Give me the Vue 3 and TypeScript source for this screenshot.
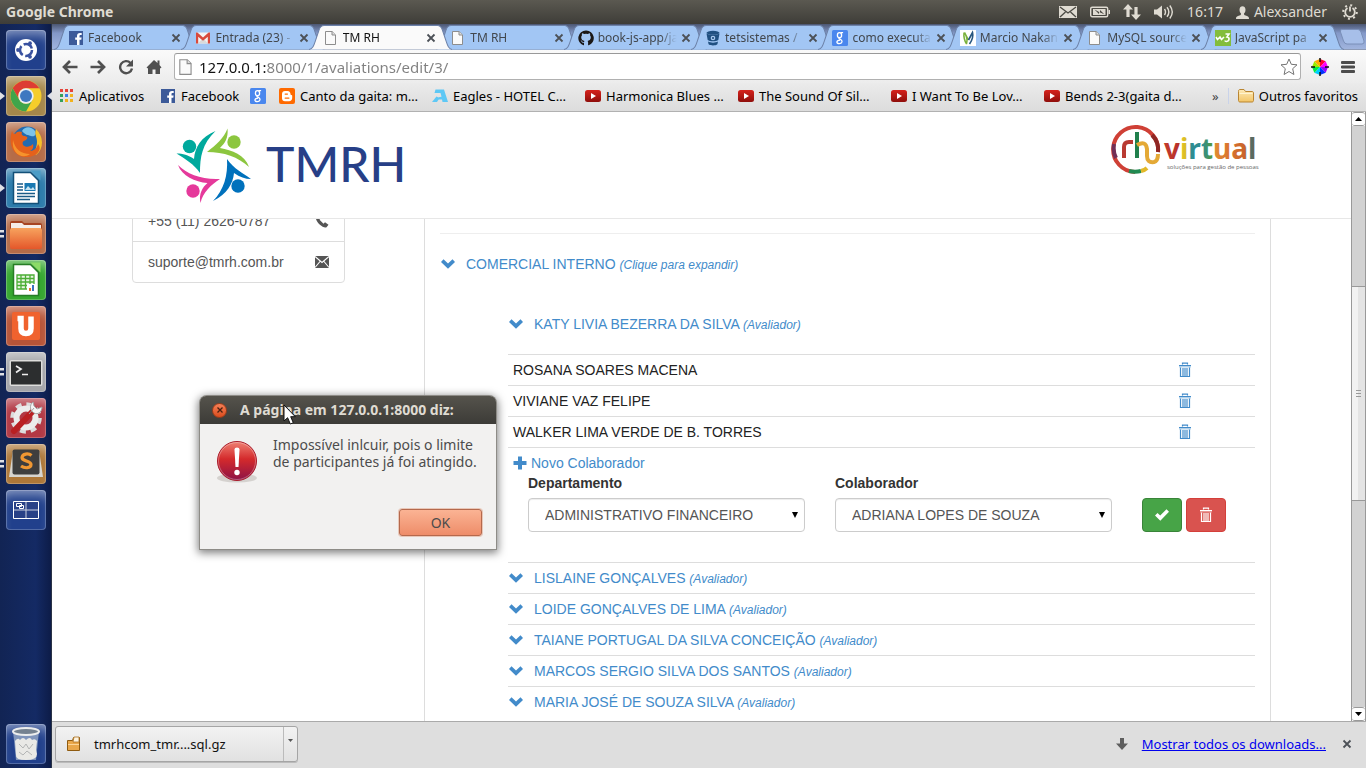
<script setup lang="ts">
import { ref } from 'vue'

interface Tab { title: string; icon: string; active?: boolean }
interface Bookmark { title: string; icon: string }
interface LauncherItem { name: string; icon: string; left?: 'arrow' | 'pips'; right?: boolean }

const tabs: Tab[] = [
  { title: 'Facebook', icon: 'facebook' },
  { title: 'Entrada (23) -', icon: 'gmail' },
  { title: 'TM RH', icon: 'page', active: true },
  { title: 'TM RH', icon: 'page' },
  { title: 'book-js-app/ja', icon: 'github' },
  { title: 'tetsistemas /', icon: 'bitbucket' },
  { title: 'como executa', icon: 'google' },
  { title: 'Marcio Nakan', icon: 'marcio' },
  { title: 'MySQL source', icon: 'page' },
  { title: 'JavaScript pa', icon: 'w3' },
]

const bookmarks: Bookmark[] = [
  { title: 'Aplicativos', icon: 'apps' },
  { title: 'Facebook', icon: 'facebook' },
  { title: '', icon: 'google' },
  { title: 'Canto da gaita: m…', icon: 'blogger' },
  { title: 'Eagles - HOTEL C…', icon: 'eagles' },
  { title: 'Harmonica Blues …', icon: 'youtube' },
  { title: 'The Sound Of Sil…', icon: 'youtube' },
  { title: 'I Want To Be Lov…', icon: 'youtube' },
  { title: 'Bends 2-3(gaita d…', icon: 'youtube' },
]

const launcher: LauncherItem[] = [
  { name: 'Dash', icon: 'dash' },
  { name: 'Chrome', icon: 'chrome', left: 'arrow', right: true },
  { name: 'Firefox', icon: 'firefox' },
  { name: 'Writer', icon: 'writer', left: 'arrow' },
  { name: 'Arquivos', icon: 'files', left: 'pips' },
  { name: 'Calc', icon: 'calc' },
  { name: 'Ubuntu One', icon: 'one' },
  { name: 'Terminal', icon: 'terminal', left: 'pips' },
  { name: 'Configurações', icon: 'settings' },
  { name: 'Sublime Text', icon: 'sublime', left: 'pips' },
  { name: 'Espaços de trabalho', icon: 'workspaces' },
]

const members = ['ROSANA SOARES MACENA', 'VIVIANE VAZ FELIPE', 'WALKER LIMA VERDE DE B. TORRES']
const evaluators = [
  'LISLAINE GONÇALVES',
  'LOIDE GONÇALVES DE LIMA',
  'TAIANE PORTUGAL DA SILVA CONCEIÇÃO',
  'MARCOS SERGIO SILVA DOS SANTOS',
  'MARIA JOSÉ DE SOUZA SILVA',
]

const url = ref('127.0.0.1:8000/1/avaliations/edit/3/')
const department = ref('ADMINISTRATIVO FINANCEIRO')
const collaborator = ref('ADRIANA LOPES DE SOUZA')
const alertOpen = ref(true)
</script>

<template>
  <div class="desktop">
    <svg class="sprite" aria-hidden="true">
      <defs>
        <linearGradient id="g-red" x1="0" y1="0" x2="0" y2="1">
          <stop offset="0" stop-color="#ef8173" /><stop offset=".45" stop-color="#d42a2c" /><stop offset="1" stop-color="#8c1246" />
        </linearGradient>
        <linearGradient id="g-yt" x1="0" y1="0" x2="0" y2="1">
          <stop offset="0" stop-color="#d6221c" /><stop offset="1" stop-color="#8f0e0b" />
        </linearGradient>
        <linearGradient id="g-orange" x1="0" y1="0" x2="0" y2="1">
          <stop offset="0" stop-color="#f7a35e" /><stop offset="1" stop-color="#e4572a" />
        </linearGradient>
        <linearGradient id="g-folder" x1="0" y1="0" x2="0" y2="1">
          <stop offset="0" stop-color="#fdeab8" /><stop offset="1" stop-color="#f3c566" />
        </linearGradient>
        <linearGradient id="g-word" x1="0" y1="0" x2="1" y2="0">
          <stop offset="0" stop-color="#c23a2c" /><stop offset=".16" stop-color="#b8322c" /><stop offset=".18" stop-color="#e0c426" /><stop offset=".27" stop-color="#d8b729" />
          <stop offset=".28" stop-color="#2f8c91" /><stop offset=".42" stop-color="#2f8c91" /><stop offset=".52" stop-color="#53993c" /><stop offset=".56" stop-color="#e08a32" />
          <stop offset=".7" stop-color="#d9742f" /><stop offset=".88" stop-color="#c9642c" /><stop offset=".9" stop-color="#2c7f91" /><stop offset="1" stop-color="#7f5a34" />
        </linearGradient>
      </defs>
      <symbol id="i-page" viewBox="0 0 16 16"><path d="M2.500 1.500h6.600l3.400 3.400v9.600h-10z" fill="#fafafa" stroke="#8d8d8d" /><path d="M9 1.500V5h3.500" fill="#ddd" stroke="#8d8d8d" /></symbol>
      <symbol id="i-facebook" viewBox="0 0 16 16"><path fill="#3c5a99" d="M1 1h14v14H1z" /><path fill="#fff" d="M9 15V9.700H7.200V7.500H9V6c0-2 1.100-3 3-3h1.700v2.100h-1.100c-.9 0-1.100.4-1.100 1.100v1.300h2.100l-.3 2.200h-1.800V15z" /></symbol>
      <symbol id="i-gmail" viewBox="0 0 16 16"><path fill="#f4f4f4" d="M1 2.500h14v11H1z" /><path fill="#dadada" d="M3 13.500 8 8l5 5.500z" /><path fill="#d84a3d" d="M1 13.500v-11h1.400L8 7.400l5.600-4.900H15v11h-2.200V6.700L8 10.800 3.200 6.700v6.800z" /></symbol>
      <symbol id="i-github" viewBox="0 0 16 16"><path fill="#1b1817" fill-rule="evenodd" d="M8 .5a7.600 7.600 0 0 0-2.500 14.800c.4.100.5-.2.500-.4v-2.100c-1.700.3-2.300-.6-2.500-1.200C3.200 11 3 10.600 2.500 10.300c1-.2 1.500.8 1.800 1.200.5.7 1.200.6 1.700.4.100-.5.300-.8.500-1C4.700 10.600 3.200 9.800 3.200 7.300c0-.9.300-1.600.8-2.100-.2-.5-.2-1.300.1-2 .8 0 1.400.4 2 .8a7 7 0 0 1 3.800 0c.6-.4 1.200-.8 2-.8.3.7.3 1.500.1 2 .5.5.8 1.200.8 2.100 0 2.500-1.500 3.300-3.300 3.600.4.300.6.8.6 1.600v2.400c0 .2.100.5.500.4A7.600 7.600 0 0 0 8 .5z" /></symbol>
      <symbol id="i-bitbucket" viewBox="0 0 16 16"><ellipse cx="8" cy="2.800" rx="6.500" ry="2" fill="#205081" /><path fill="#205081" d="M1.500 3.500c2 1.700 11 1.700 13 0L13.300 10c-2 1.700-8.600 1.700-10.600 0zM3 11.500c2.500 1.500 7.500 1.500 10 0l-.6 2.700c-1.500 1.600-7.300 1.600-8.800 0z" /><circle cx="8" cy="8" r="2.300" fill="#a9c8ee" /><circle cx="8" cy="8" r="1.100" fill="#205081" /></symbol>
      <symbol id="i-google" viewBox="0 0 16 16"><rect width="16" height="16" rx="1.500" fill="#4a87ee" /><g fill="none" stroke="#fff" stroke-width="1.300"><ellipse cx="7.500" cy="5.200" rx="2.100" ry="2.500" /><path d="M8.500 2.700h2.600M7.200 7.800C6 9 9.600 9 10 11.200c.2 1.600-1.200 2.400-2.800 2.400-3 0-3.400-3 .8-3.500" /></g></symbol>
      <symbol id="i-marcio" viewBox="0 0 16 16"><path fill="#fff" d="M0 0h16v16H0z" /><path d="M4 2.500c-.5 4 .5 8 2.500 11.500M6.500 14C8 9 6 5 4.500 2.500L8.500 10" fill="none" stroke="#7ab13c" stroke-width="1.500" /><path d="m8.500 10 4-7.500c1 4-.5 8-3 11.500" fill="none" stroke="#27567f" stroke-width="1.600" /></symbol>
      <symbol id="i-w3" viewBox="0 0 16 16"><path fill="#83bd3c" d="M0 0h16v16H0z" /><path d="m1 7 1.500 2.500L5 7l1.500 2.500L9 7M10.500 4h3.500L12 7c2.800 0 2.800 4-.5 4.500-1 0-1.500-.5-1.500-1" fill="none" stroke="#fff" stroke-width="1.600" /></symbol>
      <symbol id="i-apps" viewBox="0 0 14 14"><path fill="#e5433a" d="M0 0h3v3H0zM5 0h3v3H5zM10 0h3v3h-3z" /><path fill="#34a05a" d="M0 5h3v3H0z" /><path fill="#3d7fe8" d="M5 5h3v3H5z" /><path fill="#f2b21b" d="M10 5h3v3h-3zM5 10h3v3H5zM10 10h3v3h-3z" /><path fill="#34a05a" d="M0 10h3v3H0z" /></symbol>
      <symbol id="i-blogger" viewBox="0 0 16 16"><rect width="16" height="16" rx="2" fill="#ff6a00" /><path fill="#fff" fill-rule="evenodd" d="M6 3h2.500C10.500 3 11.500 4.500 11.500 6c0 .8.300 1 1 1 .4 0 .7.300.7.800V10c0 2-1.300 3.200-3.200 3.200H6C4.200 13.200 3 12 3 10.200V6c0-1.800 1.200-3 3-3zm.2 2.500c-.9 0-.9 1.200 0 1.200h2.200c.9 0 .9-1.200 0-1.200zm0 4c-.9 0-.9 1.300 0 1.300h3.700c.9 0 .9-1.300 0-1.300z" /></symbol>
      <symbol id="i-eagles" viewBox="0 0 16 16"><path fill="#5ec8f5" d="M3.500 1.500h8.500L16 14h-5.500L10 11.500H5.500c.5-2 2-2.700 4-2.700L8.500 5H2.500z" /><path fill="#5ec8f5" d="M4.500 8.500 0 14h5l2.500-4z" /></symbol>
      <symbol id="i-youtube" viewBox="0 0 16 16"><rect y="2" width="16" height="12" rx="2.500" fill="url(#g-yt)" /><path fill="#fff" d="m6 5 5 3-5 3z" /></symbol>
      <symbol id="i-folder" viewBox="0 0 16 16"><path d="M.5 3.500C.5 2 1 1.500 2 1.500h4l1.500 2h6.500c1 0 1.500.5 1.500 1.500v7.500c0 .8-.5 1.500-1.500 1.500H2c-1 0-1.500-.7-1.500-1.500z" fill="url(#g-folder)" stroke="#b98531" /><path d="M1.500 5.500h13" stroke="#fff3cf" /></symbol>
      <symbol id="i-close" viewBox="0 0 10 10"><path d="m1.500 1.500 7 7m0-7-7 7" stroke="#4c5157" stroke-width="1.800" fill="none" /></symbol>
      <symbol id="i-chevron" viewBox="0 0 14 10"><path fill="currentColor" d="M2.500.3 7 4.500 11.500.3 14 2.900 7 9.800 0 2.900z" /></symbol>
      <symbol id="i-trash" viewBox="0 0 14 16"><path d="M4.500 2.500V1.200h5v1.300" fill="none" stroke="currentColor" stroke-width="1.200" /><path fill="currentColor" d="M1 3h12v2.500H1z" opacity=".4" /><path d="M1 3.500h12" stroke="currentColor" /><path d="M2.500 5.500v9h9v-9M5 6v8M7 6v8M9 6v8" fill="none" stroke="currentColor" stroke-width="1.200" /></symbol>
      <symbol id="i-check" viewBox="0 0 14 12"><path fill="currentColor" d="M0 6.600 2.500 4l2.700 2.600L11.500.3 14 2.800 5.300 11.800z" /></symbol>

      <symbol id="i-dash" viewBox="0 0 40 40"><circle cx="20" cy="20" r="11" fill="#fff" /><circle cx="20" cy="20" r="6" fill="none" stroke="#3a52a0" stroke-width="2.500" stroke-dasharray="10 2.560" /><circle cx="12" cy="20" r="1.900" fill="#3a52a0" /><circle cx="24" cy="13.200" r="1.900" fill="#3a52a0" /><circle cx="24" cy="26.800" r="1.900" fill="#3a52a0" /></symbol>
      <symbol id="i-chrome" viewBox="0 0 40 40"><circle cx="20" cy="20" r="15.500" fill="#f5cd2b" /><path fill="#dd3c33" d="M6.600 12.300a15.500 15.500 0 0 1 26.800 0H20a7.700 7.700 0 0 0-6.700 11.500z" /><path fill="#3fa54b" d="M6.600 12.300a15.500 15.500 0 0 0 13.400 23.200l6.700-11.700A7.700 7.700 0 0 1 13.300 23.800z" /><circle cx="20" cy="20" r="7.700" fill="#e8eef6" /><circle cx="20" cy="20" r="6" fill="#3f78c0" /></symbol>
      <symbol id="i-firefox" viewBox="0 0 40 40"><circle cx="21" cy="19" r="14.500" fill="#236bb0" /><path fill="#7cc3e8" d="M16 9c3-5 9-5 13 0 2 4-1 6-4 5s-6-1-9-5z" /><path fill="#f5bf2b" d="M30 7c8 7 8 20 0 26-3-3 1-7 1-13 0-5-3-8-1-13z" /><path fill="#e5611b" d="M6 9c1 3 2 3 3 3 2-3 5-3 7-2-1 2 0 4 3 4 3 1 3 2 1 4-3 1-4 2-3 5 3 3 7 2 10-1 1 4-1 6-3 7 4 0 7-3 8-7 5 6-2 13-11 13C10 36 1 25 6 9z" /><path fill="#f6932c" d="M7 18c2 9 8 14 17 14-8 6-19-1-17-14z" /></symbol>
      <symbol id="i-writer" viewBox="0 0 40 40"><path fill="#fff" stroke="#135078" stroke-width="1.500" d="M7.500 4.500h17l8 8v23h-25z" /><path fill="#4a9cc6" d="M24.500 2.500h10v10z" /><path d="M11 16h6M11 19h6M11 22h6M11 25.500h18M11 28.500h18M11 31.500h13" stroke="#1b5b86" stroke-width="1.700" /><path fill="#1a79b2" d="M18.500 15h11v8h-11z" /><path fill="#c6e3f1" d="m19 22 3-4 3 3 2-2 2 3z" /></symbol>
      <symbol id="i-files" viewBox="0 0 40 40"><path fill="#a74522" d="M4 9q0-2 2-2h10l2 2h16q2 0 2 2v22H4z" /><path fill="#f5eee8" d="M5 9h11l2 2h17v5H5z" /><rect x="4" y="14" width="32" height="21" rx="2" fill="url(#g-orange)" /></symbol>
      <symbol id="i-calc" viewBox="0 0 40 40"><path fill="#fff" stroke="#277c25" stroke-width="1.500" d="M7.500 4.500h17l8 8v23h-25z" /><path fill="#8cdb67" d="M24.500 2.500h10v10z" /><path fill="#eaf6e4" d="M11 15h17v14H11z" /><path d="M11 15h17v14H11zM11 18.500h17M11 22h17M11 25.500h17M15 15v14M19.500 15v14M24 15v14" fill="none" stroke="#4cae36" stroke-width="1.300" /><path fill="#fff" d="M21 24h9v8h-9z" /><path stroke="#e5702b" stroke-width="2" d="M24 31v-3" /><path stroke="#3c72bd" stroke-width="2" d="M27 31v-6" /></symbol>
      <symbol id="i-one" viewBox="0 0 40 40"><rect x="6" y="6" width="28" height="28" rx="2" fill="#f0622e" /><path fill="none" stroke="#fff" stroke-width="5.500" d="M11.500 12.500h3.500v10q0 5 5 5t5-5v-12" /></symbol>
      <symbol id="i-terminal" viewBox="0 0 40 40"><rect x="3.500" y="8" width="33" height="26" rx="2" fill="#dededc" /><rect x="5" y="9.500" width="30" height="23" fill="#2c2e2f" /><path d="m10 14 5 3-5 3.500M16 22.500h6" fill="none" stroke="#eee" stroke-width="1.700" /></symbol>
      <symbol id="i-settings" viewBox="0 0 40 40"><circle cx="20" cy="20" r="12.800" fill="none" stroke="#dcdcdc" stroke-width="6" stroke-dasharray="5.500 4.550" /><circle cx="20" cy="20" r="9.500" fill="none" stroke="#ececec" stroke-width="6" /><path d="m8 33 19-20" stroke="#b91f22" stroke-width="6" stroke-linecap="round" /><path d="m23 16 5-6M27 4c-4 3-3 9 1 11s8-1 8-6l-5 2-3-3z" fill="#f4f4f4" stroke="#a5a5a5" /></symbol>
      <symbol id="i-sublime" viewBox="0 0 40 40"><path fill="#d6d4cf" d="M7 6h26l4 27H3z" /><rect x="6.500" y="5.500" width="27" height="25" rx="2" fill="#3e3e3e" /><path d="M25.500 11.500c-3-2.500-9-2-9.500 2-.3 4 9 3 9 7 0 4-6.500 4-10 1.500" fill="none" stroke="#ef9732" stroke-width="3.200" /></symbol>
      <symbol id="i-workspaces" viewBox="0 0 40 40"><path fill="#284187" stroke="#fff" d="M7.500 11.500h25v17h-25z" /><path fill="none" stroke="#ccd2e0" d="M20 12v16M8 20h24" /><path fill="none" stroke="#fff" d="M10.500 13.500h5v3h-5zM13.500 15.500h4v3h-4z" /></symbol>
      <symbol id="i-bin" viewBox="0 0 40 40"><path fill="#9fb0c9" opacity=".75" d="M7 7h26l-3 29H10z" /><path fill="#e9e9e6" d="M9 17q3-4 5-1 3-4 6 0 4-4 6 0 3-2 5 1l-1 9 1 4q0 6-11 6T10 31z" /><path d="m13 20 4 4 3-4 3 5 4-5M13 28l4 3 4-4 5 4" fill="none" stroke="#b3b5b5" /><ellipse cx="20" cy="7.500" rx="13" ry="3.500" fill="#758290" stroke="#eceded" stroke-width="2" /></symbol>
    </svg>

    <header class="panel">
      <strong>Google Chrome</strong>
      <div class="indicators">
        <svg width="18" height="14" viewBox="0 0 18 14"><path fill="#dfdbd2" d="M0 1h18v12H0z" /><path d="m1 2 8 6 8-6M1 12l5.500-5M17 12l-5.500-5" fill="none" stroke="#4a4943" stroke-width="1.300" /></svg>
        <svg width="20" height="14" viewBox="0 0 20 14"><rect x=".7" y="2.200" width="17" height="9.600" rx="1.500" fill="none" stroke="#dfdbd2" stroke-width="1.400" /><path fill="#dfdbd2" d="M3 4h12.500v6H3zM18.500 5H20v4h-1.500z" /><path fill="#45443f" d="m4.500 4.500 5.500 3V5l4.500 4.500-5.500-2.800V9z" /></svg>
        <svg width="18" height="16" viewBox="0 0 18 16"><path fill="#dfdbd2" d="m5 0 5 5.500H6.600V13H3.400V5.500H0zM13 16l-5-5.500h3.400V3h3.200v7.500H18z" /></svg>
        <svg width="20" height="16" viewBox="0 0 20 16"><path fill="#dfdbd2" d="M0 5.500h3L8 1.500v13L3 10.500H0z" /><path d="M10.500 5q2 3 0 6M13 3.300q3.700 4.700 0 9.400M15.800 1.500q5 6.500 0 13" fill="none" stroke="#dfdbd2" stroke-width="1.400" /></svg>
        <span>16:17</span>
        <span class="user"><svg width="13" height="13" viewBox="0 0 13 13"><path fill="#dfdbd2" d="M3.500 3.500C3.500-1 9.500-1 9.500 3.500c0 2-.5 3-1.500 4 0 2 1 1.800 3 2.500 1.500.5 2 1 2 3H0c0-2 .5-2.500 2-3 2-.7 3-.5 3-2.500-1-1-1.500-2-1.500-4z" /></svg>Alexsander</span>
        <svg width="16" height="16" viewBox="0 0 16 16"><path d="M5.500 4a4.800 4.800 0 1 0 5 0M8 2.500v5" fill="none" stroke="#dfdbd2" stroke-width="1.800" /><circle cx="8" cy="8" r="6.800" fill="none" stroke="#dfdbd2" stroke-width="2" stroke-dasharray="2 3.340" /></svg>
      </div>
    </header>

    <div class="workspace">
      <nav class="launcher" aria-label="Lançador">
        <button v-for="item in launcher" :key="item.name" class="tile" :class="item.icon" :aria-label="item.name">
          <svg viewBox="0 0 40 40"><use :href="'#i-' + item.icon" /></svg>
          <i v-if="item.left" class="mark" :class="item.left"></i>
          <i v-if="item.right" class="mark focus"></i>
        </button>
        <button class="tile bin" aria-label="Lixeira"><svg viewBox="0 0 40 40"><use href="#i-bin" /></svg></button>
      </nav>

      <section class="browser">
        <div class="tabstrip">
          <div v-for="(tab, i) in tabs" :key="i" class="tab" :class="{ active: tab.active }">
            <svg class="tab-shape" viewBox="0 0 143 25" preserveAspectRatio="none"><path d="M0 24.500C4 24 5 20 7 14L10 5Q11.500.5 15 .5h113q3.500 0 5 4.500l3 9c2 6 3 10 7 10.500" /></svg>
            <svg class="favicon"><use :href="'#i-' + tab.icon" /></svg>
            <span class="tab-title">{{ tab.title }}</span>
            <button class="tab-close" aria-label="Fechar aba"><svg width="10" height="10"><use href="#i-close" /></svg></button>
          </div>
          <button class="new-tab" aria-label="Nova aba"><svg width="26" height="16" viewBox="0 0 26 16"><path d="M3 .5h16q2 0 3 2.500l3 9q.7 3-2 3H8q-2.500 0-3.500-3l-3-9Q.7.5 3 .5z" fill="#a7bfe9" stroke="#7a8fb8" /></svg></button>
        </div>

        <div class="toolbar">
          <button aria-label="Voltar"><svg width="16" height="14" viewBox="0 0 16 14"><path d="M8 1 2 7l6 6M2 7h13.500" fill="none" stroke="#505050" stroke-width="2.700" /></svg></button>
          <button aria-label="Avançar"><svg width="16" height="14" viewBox="0 0 16 14"><path d="m8 1 6 6-6 6M14 7H.5" fill="none" stroke="#505050" stroke-width="2.700" /></svg></button>
          <button aria-label="Recarregar"><svg width="16" height="16" viewBox="0 0 16 16"><path d="M12.500 4A6 6 0 1 0 14 9.500" fill="none" stroke="#505050" stroke-width="2.400" /><path fill="#505050" d="M15 .5v7H8z" /></svg></button>
          <button aria-label="Início"><svg width="16" height="16" viewBox="0 0 16 16"><path fill="#505050" d="M8 1 .5 8.500 2 9.500V15h4.500v-4.500h3V15H14V9.500l1.500-1L13.500 6V1.500h-2V4z" /></svg></button>
          <div class="omnibox">
            <svg width="18" height="18"><use href="#i-page" /></svg>
            <input v-model="url" type="text" aria-label="Endereço" />
            <button aria-label="Favoritar"><svg width="18" height="18" viewBox="0 0 18 18"><path d="m9 1 2.300 5.300 5.700.5-4.300 3.900 1.200 5.800L9 13.500l-4.900 3 1.200-5.800L1 6.800l5.700-.5z" fill="#fff" stroke="#747474" /></svg></button>
          </div>
          <button aria-label="Cores">
            <svg width="18" height="18" viewBox="-9 -9 18 18"><path fill="#f03" d="M0 0V-8L5.700-5.700z" /><path fill="#f0f" d="m0 0 5.700-5.700L8 0z" /><path fill="#90f" d="M0 0h8L5.700 5.700z" /><path fill="#03f" d="m0 0 5.700 5.700L0 8z" /><path fill="#0cf" d="M0 0v8l-5.700-2.300z" /><path fill="#0e4" d="m0 0-5.700 5.700L-8 0z" /><path fill="#9e0" d="M0 0h-8l2.300-5.700z" /><path fill="#fa0" d="m0 0-5.700-5.700L0-8z" /><path d="M0-9v4M0 5v4M-9 0h4M5 0h4" stroke="#111" stroke-width="1.500" /></svg>
          </button>
          <button aria-label="Menu"><svg width="14" height="14" viewBox="0 0 14 14"><path d="M1 2.500h12M1 7h12M1 11.500h12" stroke="#4c4c4c" stroke-width="2.800" stroke-linecap="round" /></svg></button>
        </div>

        <nav class="bookmarks" aria-label="Favoritos">
          <div class="bookmark-list">
            <a v-for="(b, i) in bookmarks" :key="i" href="#" :aria-label="b.title || 'Google'"><svg :class="{ apps: b.icon === 'apps' }"><use :href="'#i-' + b.icon" /></svg>{{ b.title }}</a>
          </div>
          <button class="more">»</button>
          <a href="#" class="others"><svg><use href="#i-folder" /></svg>Outros favoritos</a>
        </nav>

        <div class="viewport">
          <main class="page">
            <div class="site-header">
              <div class="brand">
                <svg width="76" height="76" viewBox="0 0 76 76">
                  <g fill="#00a99d"><circle cx="13.500" cy="18.500" r="6.700" /><path d="M39.500 3C25 9 19 19 18 31 12 27 7 25.500.5 25.500 9 31 18 36 24 45c0-16 2-29 15.500-42z" /></g>
                  <g fill="#8cc63f"><circle cx="58" cy="14" r="6.700" /><path d="M51.500.5C48 10 40 17 31 24c17 0 31 5 42 15-4-12-17-17-29-19 5-5 8.500-10 7.500-19.500z" /></g>
                  <g fill="#0071bc"><circle cx="62" cy="58" r="6.700" /><path d="M51 31c1 16-3 31-14 42 14-7 20-17 21-28 6 4 11 6 17 6-8-6-17-10-24-20z" /></g>
                  <g fill="#e5399b"><circle cx="17" cy="63" r="6.700" /><path d="M2 37c9 9 24 15 42 14-9 6-17 13-19.500 24-2-9 2-16 7-20C19 54 6 48 2 37z" /></g>
                </svg>
                <span>TMRH</span>
              </div>
              <svg class="partner" width="150" height="52" viewBox="0 0 150 52">
                <g fill="none" stroke-width="4">
                  <path d="M24 48A22.500 22.500 0 1 1 47 28" stroke="#cf4036" />
                  <path d="M3 20a22.500 22.500 0 0 0 2 14" stroke="#713056" /><path d="M41 11q7 7 6 17" stroke="#8f2724" />
                  <path d="M18 47q6 1.500 12 0" stroke="#218a51" /><path d="M30 47q4-1 6-3" stroke="#e2b929" />
                  <path d="M13 34V23q0-5 5-5h4" stroke="#b93a32" /><path d="M26 8v26" stroke="#20804c" /><path d="M26 21q9-5 10 4v7q0 7 7 6 4-1 4-8" stroke="#e4a936" />
                </g>
                <text x="53" y="35" class="virtual" fill="url(#g-word)">virtual</text>
                <text x="56" y="45" class="slogan">soluções para gestão de pessoas</text>
              </svg>
            </div>

            <div class="content">
              <ul class="contact">
                <li>+55 (11) 2626-0787 <svg width="14" height="14" viewBox="0 0 14 14"><path fill="#555" d="M1 2.500 3.500.5 6 4 4.500 5.800l4 4L10 8.300l3.500 2.500-2 2.500C8 15-.5 7 1 2.500z" /></svg></li>
                <li>suporte@tmrh.com.br <svg width="14" height="14" viewBox="0 0 14 14"><path fill="#555" d="M0 1h14v12H0z" /><path d="m0 1.500 7 6 7-6M0 12.500l5-6M14 12.500l-5-6" fill="none" stroke="#fff" stroke-width="1.100" /></svg></li>
              </ul>

              <section class="panel-box">
                <hr />
                <a class="toggle" href="#"><svg width="14" height="10"><use href="#i-chevron" /></svg><span>COMERCIAL INTERNO <em>(Clique para expandir)</em></span></a>
                <div class="department">
                  <a class="toggle lead" href="#"><svg width="14" height="10"><use href="#i-chevron" /></svg><span>KATY LIVIA BEZERRA DA SILVA <em>(Avaliador)</em></span></a>
                  <table>
                    <tbody>
                      <tr v-for="m in members" :key="m">
                        <td>{{ m }}</td>
                        <td class="action"><button :aria-label="'Excluir ' + m"><svg width="14" height="16"><use href="#i-trash" /></svg></button></td>
                      </tr>
                    </tbody>
                  </table>
                  <div class="new-member">
                    <a href="#" class="add"><svg width="14" height="14" viewBox="0 0 14 14"><path d="M7 .5v13M.5 7h13" stroke="currentColor" stroke-width="4" /></svg>Novo Colaborador</a>
                    <form @submit.prevent>
                      <div class="field">
                        <label for="department">Departamento</label>
                        <div class="select"><select id="department" v-model="department"><option>ADMINISTRATIVO FINANCEIRO</option></select></div>
                      </div>
                      <div class="field">
                        <label for="collaborator">Colaborador</label>
                        <div class="select"><select id="collaborator" v-model="collaborator"><option>ADRIANA LOPES DE SOUZA</option></select></div>
                      </div>
                      <div class="actions">
                        <button class="ok" aria-label="Confirmar"><svg width="14" height="12"><use href="#i-check" /></svg></button>
                        <button type="button" class="remove" aria-label="Remover"><svg width="14" height="16"><use href="#i-trash" /></svg></button>
                      </div>
                    </form>
                  </div>
                  <ul class="evaluators">
                    <li v-for="e in evaluators" :key="e"><a class="toggle" href="#"><svg width="14" height="10"><use href="#i-chevron" /></svg><span>{{ e }} <em>(Avaliador)</em></span></a></li>
                  </ul>
                </div>
              </section>
            </div>
          </main>

          <div class="scrollbar" aria-hidden="true">
            <b><svg width="7" height="4" viewBox="0 0 7 4"><path d="m3.500 0 3.500 4H0z" /></svg></b>
            <div class="track before"></div>
            <div class="thumb"><svg width="5" height="7" viewBox="0 0 5 7"><path d="M0 .5h5M0 3.500h5M0 6.500h5" stroke="#999" /></svg></div>
            <div class="track after"></div>
            <b><svg width="7" height="4" viewBox="0 0 7 4"><path d="m3.500 4 3.500-4H0z" /></svg></b>
          </div>
        </div>

        <footer class="downloads">
          <div class="download">
            <button class="file"><svg width="16" height="16" viewBox="0 0 16 16"><path fill="#e9a74a" stroke="#8f5b10" d="M1.500 4.500h5l1-3h6v13h-12z" /><path fill="#fff4df" stroke="#a97223" stroke-width=".8" d="M8 1h5v5H7z" /><path d="M2 8.500h11" stroke="#fbd699" /></svg>tmrhcom_tmr....sql.gz</button>
            <button class="menu" aria-label="Opções"><svg width="5" height="3" viewBox="0 0 5 3"><path fill="#555" d="M0 0h5L2.500 3z" /></svg></button>
          </div>
          <div class="all">
            <svg width="12" height="12" viewBox="0 0 12 12"><path fill="#5e5e5e" d="M4 0h4v5.500h4L6 12 0 5.500h4z" /></svg>
            <a href="#">Mostrar todos os downloads...</a>
            <button aria-label="Fechar"><svg width="10" height="10"><use href="#i-close" /></svg></button>
          </div>
        </footer>
      </section>
    </div>

    <div v-if="alertOpen" class="alert" role="alertdialog" aria-labelledby="alert-title" aria-describedby="alert-text">
      <div class="alert-title">
        <button aria-label="Fechar" @click="alertOpen = false"><svg width="8" height="8" viewBox="0 0 8 8"><path d="m1.500 1.500 5 5m0-5-5 5" stroke="#4a2010" stroke-width="1.300" /></svg></button>
        <strong id="alert-title">A página em 127.0.0.1:8000 diz:</strong>
      </div>
      <div class="alert-body">
        <svg width="44" height="44" viewBox="0 0 44 44"><ellipse cx="22" cy="38" rx="20" ry="4.500" fill="#d5d2cf" /><circle cx="22" cy="21" r="19.500" fill="url(#g-red)" stroke="#a91d2c" /><circle cx="22" cy="21" r="18.500" fill="none" stroke="#fff" opacity=".3" /><path fill="#fff" d="M19.500 9.500q0-2 2.500-2t2.500 2L23.500 27h-3z" /><circle cx="22" cy="32.500" r="2.700" fill="#fff" /></svg>
        <p id="alert-text">Impossível inlcuir, pois o limite<br />de participantes já foi atingido.</p>
      </div>
      <div class="alert-actions"><button @click="alertOpen = false">OK</button></div>
    </div>
    <svg class="cursor" width="14" height="22" viewBox="0 0 14 22"><path fill="#fff" stroke="#111" d="M2 1v16l3.600-3.300L8.300 20l3-1.300L8.700 12.700h4.600z" /></svg>
  </div>
</template>

<style>
body { margin: 0; overflow: hidden; }
</style>

<style scoped>
* { box-sizing: border-box; }
button, input, select { font: inherit; margin: 0; padding: 0; border: 0; background: none; color: inherit; }
svg { display: block; flex: none; }
a { text-decoration: none; color: inherit; }
ul { list-style: none; margin: 0; padding: 0; }

.desktop { position: relative; display: flex; flex-direction: column; height: 100vh; font: 13px/16px "Noto Sans", "Open Sans", sans-serif; color: #111; overflow: hidden; }
.sprite { position: absolute; width: 0; height: 0; }

.panel { flex: none; height: 24px; display: flex; align-items: center; justify-content: space-between; padding: 0 8px 0 6px; background: linear-gradient(#5b5951, #3e3d38); color: #dfdbd2; font-size: 14px; }
.indicators { display: flex; align-items: center; gap: 13px; }
.user { display: flex; align-items: center; gap: 5px; padding-right: 2px; }

.workspace { flex: 1; min-height: 0; display: flex; }
.launcher { flex: none; width: 52px; padding: 6px 6px 4px; display: flex; flex-direction: column; gap: 6px; background: linear-gradient(90deg, #122454, #142a64 70%, #0d1c48); border-right: 1px solid #2a3346; }
.tile { position: relative; flex: none; width: 40px; height: 40px; border-radius: 4px; box-shadow: inset 0 0 0 1px rgba(255, 255, 255, .22), inset 0 10px 12px -6px rgba(255, 255, 255, .5); }
.tile svg { width: 40px; height: 40px; }
.dash, .workspaces, .bin { background: #21408c; }
.chrome { background: #a5874a; }
.firefox, .files { background: #b56c48; }
.writer { background: #2c7bab; }
.calc { background: #35a62f; }
.one { background: #b65438; }
.terminal { background: #a4a5a9; }
.settings { background: #b23844; }
.sublime { background: #ad7738; }
.bin { margin-top: auto; }
.mark { position: absolute; left: -6px; top: 15px; width: 5px; height: 10px; background: #dfe1e6; }
.arrow { clip-path: polygon(0 10%, 100% 50%, 0 90%); }
.focus { left: auto; right: -6px; clip-path: polygon(100% 10%, 0 50%, 100% 90%); }
.pips { clip-path: polygon(0 10%, 80% 10%, 80% 35%, 0 35%, 0 60%, 80% 60%, 80% 85%, 0 85%); }

.browser { flex: 1; min-width: 0; display: flex; flex-direction: column; background: #fff; }
.tabstrip { flex: none; height: 26px; display: flex; align-items: flex-end; padding-left: 2px; background: linear-gradient(#4b5672, #8398c8 35%, #a2b6df); box-shadow: inset 0 -1px #8d9ab5; }
.tab { position: relative; flex: 1 1 0; min-width: 0; height: 25px; margin-right: -16px; padding: 0 16px 0 14px; display: flex; align-items: center; font-size: 12px; color: #42474d; }
.tab-shape { position: absolute; left: 0; top: 0; width: 100%; height: 25px; fill: #a2c6f4; stroke: #6d82a8; }
.active { z-index: 1; color: #111; }
.active .tab-shape { fill: #fafafa; }
.favicon { position: relative; width: 16px; height: 16px; margin-right: 4px; }
.tab-title { position: relative; flex: 1; min-width: 0; overflow: hidden; white-space: nowrap; mask-image: linear-gradient(90deg, #000 76%, transparent 96%); }
.tab-close { position: relative; flex: none; margin-left: 1px; }
.new-tab { flex: none; margin: 0 1px 5px 11px; width: 26px; }

.toolbar { flex: none; height: 33px; display: flex; align-items: center; gap: 12px; padding: 0 11px 0 10px; background: linear-gradient(#fafafa, #ececec); }
.omnibox { flex: 1; height: 27px; display: flex; align-items: center; gap: 4px; padding: 0 2px; border: 1px solid #b0b0b0; border-top-color: #999; border-radius: 3px; background: #fff; font-size: 15px; margin-right: -2px; }
.omnibox input { flex: 1; min-width: 0; height: 22px; outline: 0; background: linear-gradient(90deg, #111 67px, #808080 67px); background-clip: text; -webkit-text-fill-color: transparent; }

.bookmarks { flex: none; height: 29px; display: flex; align-items: center; padding: 0 8px 2px; background: linear-gradient(#ebebeb, #dcdcdc); border-bottom: 1px solid #b1b1b1; color: #000; white-space: nowrap; }
.bookmark-list { flex: 1; min-width: 0; display: grid; grid-template-columns: 100px 90px 29px repeat(6, 153px); overflow: hidden; }
.bookmarks a { display: flex; align-items: center; gap: 5px; height: 20px; }
.bookmarks svg { width: 16px; height: 16px; }
.bookmarks .apps { width: 14px; height: 14px; }
.more { width: 22px; padding-right: 4px; border-right: 1px solid #c9d3ea; color: #444; margin-right: 9px; }

.viewport { flex: 1; min-height: 0; display: flex; }
.page { flex: 1; min-width: 0; display: flex; flex-direction: column; font: 14px/20px "Liberation Sans", Arial, sans-serif; color: #333; }
.site-header { flex: none; height: 107px; display: flex; justify-content: space-between; padding: 12px 90px 0 124px; border-bottom: 1px solid #e7e7e7; }
.brand { display: flex; gap: 14px; padding-top: 4px; }
.brand span { font: 500 48px/72px Lato, sans-serif; color: #273f87; }
.virtual { font: 700 28px "Noto Sans", sans-serif; }
.slogan { font: 6px "Open Sans", sans-serif; fill: #666; }

.content { flex: 1; min-height: 0; width: 100%; max-width: 1169px; margin: 0 auto; padding: 0 15px; display: flex; align-items: flex-start; gap: 79px; overflow: hidden; }
.contact { flex: none; width: 213px; margin-top: -20px; border: 1px solid #ddd; border-radius: 4px; color: #555; }
.contact li { display: flex; justify-content: space-between; align-items: center; height: 41px; padding: 0 15px; }
.contact li + li { border-top: 1px solid #ddd; }
.panel-box { flex: 1; min-width: 0; padding: 14px 15px 20px; border: solid #ddd; border-width: 0 1px; }
hr { height: 1px; margin: 0 0 20px; border: 0; background: #eee; }
.toggle { display: flex; align-items: center; gap: 11px; height: 20px; padding-left: 1px; color: #428bca; }
.toggle em { font-size: 12px; line-height: 16px; }
.department { padding: 40px 0 0 68px; }
.lead { margin-bottom: 20px; }
table { width: 100%; border-collapse: separate; border-spacing: 0; color: #222; }
td { height: 31px; padding: 5px; border-top: 1px solid #ddd; line-height: 20px; }
.action { width: 82px; padding: 0 5px; }
.action button { display: block; color: #428bca; }
.new-member { border-top: 1px solid #ddd; padding: 5px 5px 30px; }
.add { display: flex; align-items: center; gap: 4px; color: #428bca; }
form { display: flex; align-items: flex-end; gap: 30px; padding: 0 24px 0 15px; }
.field { flex: 1; min-width: 0; }
label { display: block; margin-bottom: 5px; font-weight: 700; }
.select { position: relative; }
.select::after { content: ""; position: absolute; right: 7px; top: 14px; border: solid transparent; border-width: 6px 3px 0; border-top-color: #000; }
select { display: block; appearance: none; width: 100%; height: 34px; padding: 0 16px; border: 1px solid #ccc; border-radius: 4px; background: #fff; box-shadow: inset 0 1px 1px rgba(0, 0, 0, .075); color: #555; }
.actions { display: flex; gap: 4px; }
.actions button { width: 40px; height: 34px; display: grid; place-items: center; border: 1px solid #398439; border-radius: 4px; background: #47a447; color: #fff; }
.actions .remove { background: #d9534f; border-color: #d43f3a; }
.evaluators li { border-top: 1px solid #ddd; padding: 5px 0; }

.scrollbar { flex: none; width: 15px; display: flex; flex-direction: column; border: solid #999; border-width: 0 1px; }
.scrollbar b { flex: none; height: 14px; display: grid; place-items: center; background: #fff; border: solid #999; border-width: 1px 0; border-radius: 3px; }
.track { background: #d2d2d2; }
.before { flex: 160; }
.after { flex: 206; }
.thumb { flex: 214; display: grid; place-items: center; border: solid #999; border-width: 1px 0; background: linear-gradient(90deg, #f2f2f2 50%, #e4e4e4 50%); }

.downloads { flex: none; height: 47px; display: flex; align-items: center; justify-content: space-between; padding: 0 14px 2px 3px; border-top: 1px solid #aaa; background: #dedede; }
.download { display: flex; width: 243px; height: 36px; border: 1px solid #a5a5a5; border-radius: 3px; background: linear-gradient(#f2f2f2, #e1e1e1); box-shadow: 0 1px #bbb; }
.file { flex: 1; display: flex; align-items: center; gap: 12px; padding-left: 10px; }
.menu { width: 14px; padding: 0 4px 8px; border-left: 1px solid #bbb; }
.all { display: flex; align-items: center; gap: 14px; }
.all a { color: #00e; text-decoration: underline; }
.all button { margin-left: 2px; }

.alert { position: absolute; left: 200px; top: 396px; z-index: 5; width: 296px; border-radius: 7px 7px 0 0; background: #f2f1f0; box-shadow: 0 0 0 1px #8e8c87, 0 2px 8px 2px rgba(0, 0, 0, .5); color: #4c4c4c; font-size: 14px; }
.alert-title { height: 28px; display: flex; align-items: center; gap: 13px; padding-left: 12px; border-radius: 6px 6px 0 0; background: linear-gradient(#55534c, #3c3b37); color: #dfdbd2; }
.alert-title button { width: 15px; height: 15px; display: grid; place-items: center; border: 1px solid #9e3d1a; border-radius: 50%; background: linear-gradient(#f58057, #dc4d1e); }
.alert-body { display: flex; gap: 14px; padding: 12px 10px 0 15px; }
.alert-body svg { margin-top: 4px; }
.alert-body p { margin: 0; line-height: 17px; white-space: nowrap; }
.alert-actions { display: flex; justify-content: flex-end; padding: 25px 14px 13px; }
.alert-actions button { width: 83px; height: 27px; border: 1px solid #b5694c; border-radius: 3px; background: linear-gradient(#fbb394, #ee8d69); box-shadow: 0 0 0 1px #e9c7b8; }
.cursor { position: absolute; z-index: 6; left: 282px; top: 404px; }
</style>
